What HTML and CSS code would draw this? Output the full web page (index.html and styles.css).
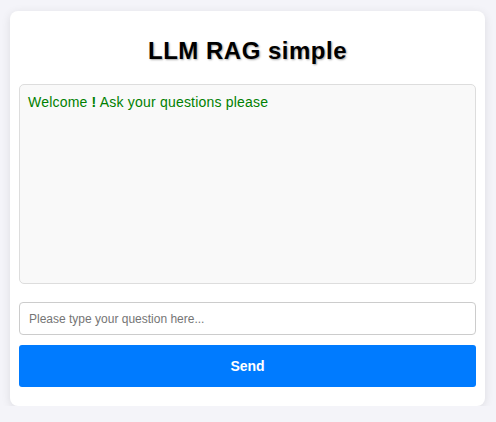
FILE: index.html
```html
<!DOCTYPE html>
<html lang="en">
<head>
<meta charset="utf-8">
<title>LLM RAG simple</title>
<link rel="stylesheet" href="styles.css">
</head>
<body>
<div class="card">
  <h1 class="title">LLM RAG simple</h1>
  <div class="chat">
    <div class="msg">Welcome <b>!</b> Ask your questions please</div>
  </div>
  <input class="question" type="text" placeholder="Please type your question here...">
  <button class="send">Send</button>
</div>
</body>
</html>
```
FILE: styles.css
```css
html, body {
  margin: 0;
  padding: 0;
  background: #f4f4f9;
  font-family: "Liberation Sans", Arial, sans-serif;
}
body {
  padding: 11px 11px 0 10px;
}
.card {
  background: #fff;
  border-radius: 8px;
  box-shadow: 0 2px 10px rgba(0, 0, 0, 0.1);
  padding: 26px 9px 19px 9px;
  display: flex;
  flex-direction: column;
}
.title {
  margin: 0 0 19px 0;
  height: 28px;
  line-height: 28px;
  font-size: 24px;
  font-weight: bold;
  letter-spacing: 0.5px;
  text-align: center;
  color: #000;
  text-shadow: 1px 1px 2px rgba(0, 0, 0, 0.35);
}
.chat {
  height: 180px;
  border: 1px solid #ddd;
  border-radius: 5px;
  background: #f9f9f9;
  padding: 9px 9px 9px 8px;
}
.msg {
  color: #008000;
  font-size: 14px;
  line-height: 16px;
  letter-spacing: 0.2px;
}
.msg b {
  font-weight: bold;
}
.question {
  margin-top: 18px;
  height: 33px;
  box-sizing: border-box;
  border: 1px solid #ccc;
  border-radius: 4px;
  padding: 0 9px;
  font-family: "Liberation Sans", Arial, sans-serif;
  font-size: 12px;
  outline: none;
}
.question::placeholder {
  color: #757575;
}
.send {
  margin-top: 10px;
  height: 42px;
  border: none;
  border-radius: 3px;
  background: #007bff;
  color: #fff;
  font-family: "Liberation Sans", Arial, sans-serif;
  font-size: 14px;
  font-weight: bold;
  cursor: pointer;
}
```
